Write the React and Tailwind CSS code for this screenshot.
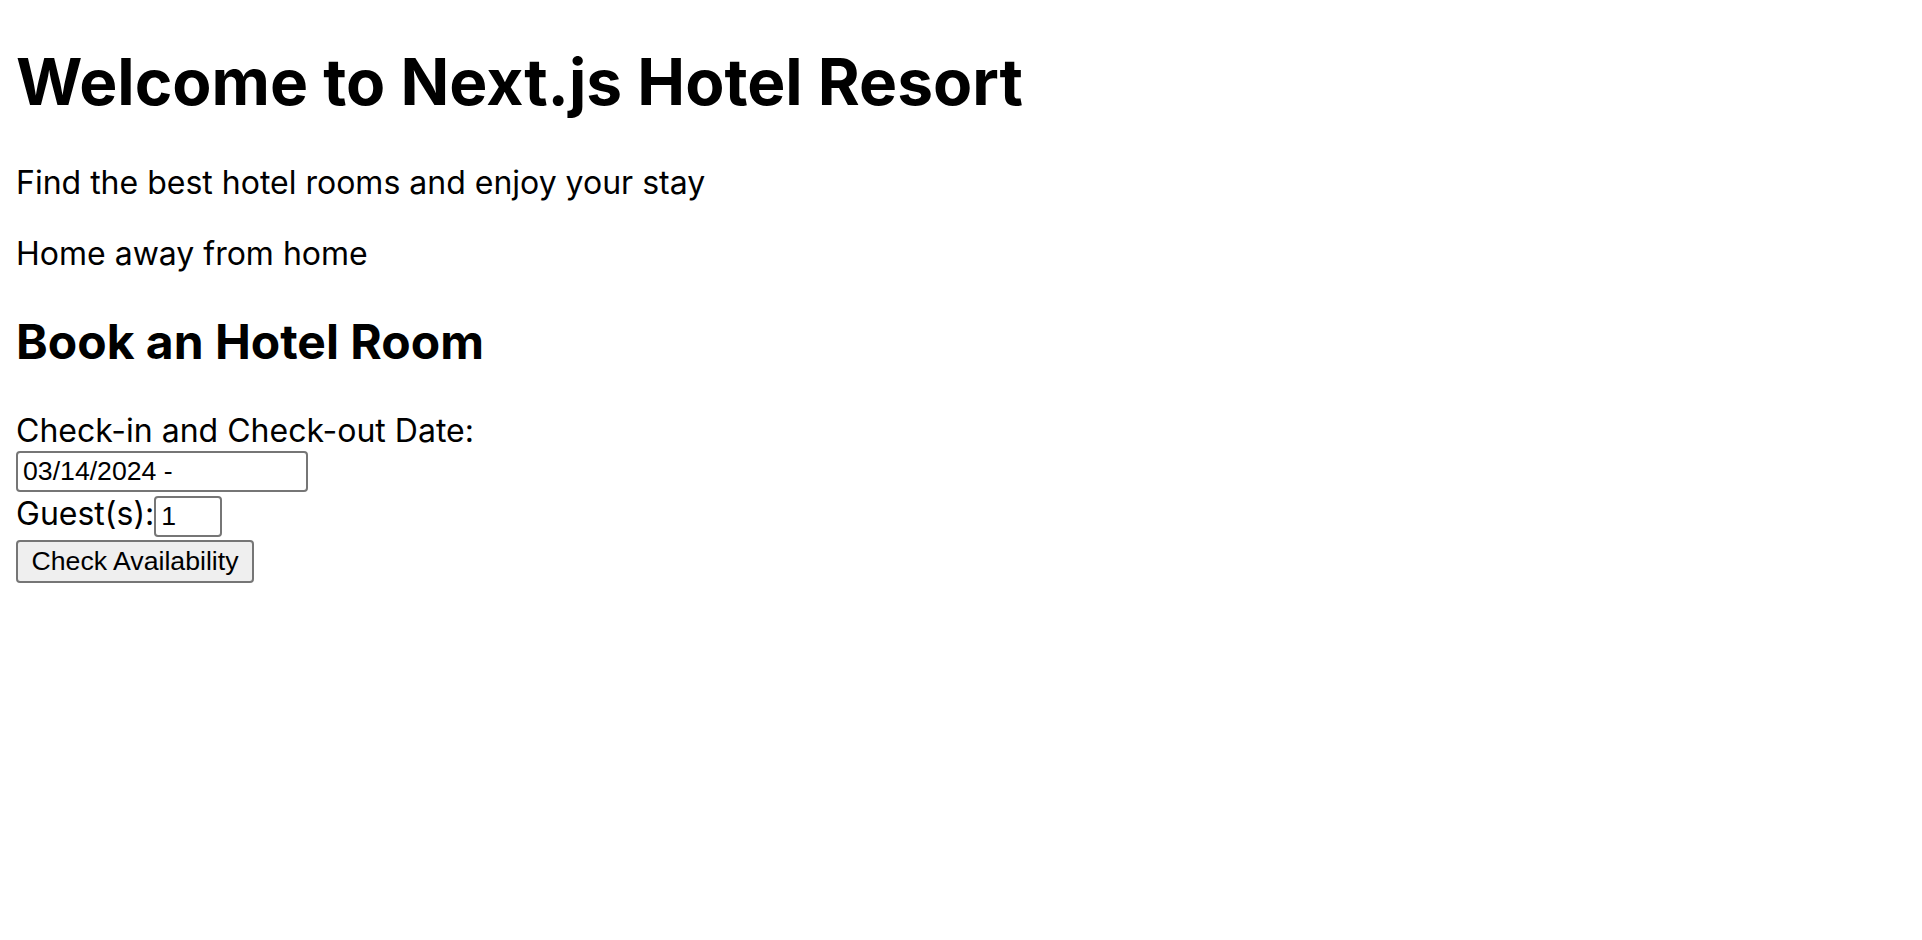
import React from 'react';

const App = () => {
  return (
    <div className="min-h-screen bg-white px-4 pb-10 font-['Inter',sans-serif] text-black">
      <h1 className="pt-[43px] text-[64px] font-bold leading-[77px]">
        Welcome to Next.js Hotel Resort
      </h1>
      <p className="mt-[43px] text-[32px] leading-[39px]">
        Find the best hotel rooms and enjoy your stay
      </p>
      <p className="mt-[32px] text-[32px] leading-[39px]">Home away from home</p>

      <h2 className="mt-[40px] text-[48px] font-bold leading-[58px]">Book an Hotel Room</h2>

      <form className="mt-[40px] flex flex-col items-start text-[32px] leading-[39px]">
        <label>Check-in and Check-out Date:</label>
        <input
          type="text"
          readOnly
          value="03/14/2024 - "
          className="mt-[1px] h-[41px] w-[292px] rounded-[4px] border-2 border-[#767676] bg-white px-[5px] font-['Liberation_Sans',Arial,sans-serif] text-[26.67px] leading-[31px] text-black outline-none"
        />
        <div className="mt-[2px] flex items-baseline">
          <label>Guest(s):</label>
          <input
            type="number"
            readOnly
            value="1"
            className="h-[41px] w-[68px] rounded-[4px] border-2 border-[#767676] bg-white px-[5px] font-['Liberation_Sans',Arial,sans-serif] text-[26.67px] leading-[31px] text-black outline-none [appearance:textfield]"
          />
        </div>
        <button
          type="button"
          className="mt-[3px] h-[43px] w-[238px] rounded-[4px] border-2 border-[#767676] bg-[#efefef] px-[12px] font-['Liberation_Sans',Arial,sans-serif] text-[26.67px] leading-[31px] text-black"
        >
          Check Availability
        </button>
      </form>
    </div>
  );
};

export default App;
